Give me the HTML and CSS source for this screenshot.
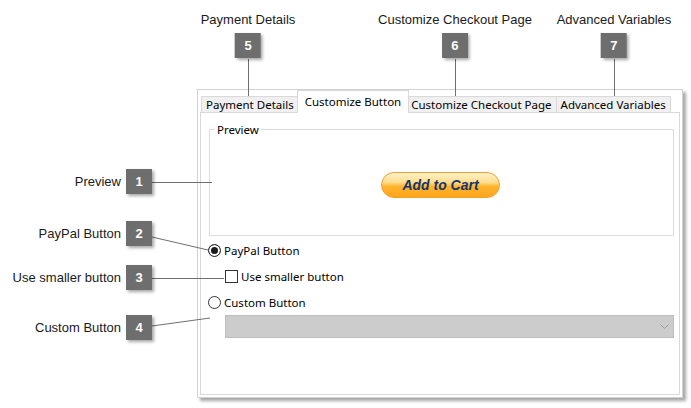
FILE: index.html
```html
<!DOCTYPE html>
<html lang="en">
	<head>
		<meta charset="utf-8">
		<title>Customize Button</title>
		<link rel="stylesheet" href="styles.css">
	</head>
	<body>
		<div class="stage">
			<div class="window">
				<div class="tabs">
					<div class="tab">Payment Details</div>
					<div class="tab active">Customize Button</div>
					<div class="tab">Customize Checkout Page</div>
					<div class="tab">Advanced Variables</div>
				</div>
				<div class="panel">
					<fieldset class="group">
						<legend>Preview</legend>
						<div class="preview">
							<button class="cart-btn" type="button">Add to Cart</button>
						</div>
					</fieldset>
					<label class="option"><input type="radio" name="kind" checked>PayPal Button</label>
					<label class="option sub"><input type="checkbox">Use smaller button</label>
					<label class="option"><input type="radio" name="kind">Custom Button</label>
					<div class="combo sub">
						<svg width="9" height="5" viewBox="0 0 9 5"><polyline points="0.5,0.5 4.5,4.5 8.5,0.5" fill="none" stroke="#9c9c9c" stroke-width="1"/></svg>
					</div>
				</div>
			</div>

			<svg class="leaders" width="691" height="408">
				<path d="M248.5 59 V97 M455.5 59 V97 M614.5 59 V97 M152 182.5 H212 M152 237 L208 250 M152 278.5 H224 M152 326 L210 318" stroke="#6f6f6f" stroke-width="1" fill="none"/>
			</svg>

			<div class="callout top c5"><span class="label">Payment Details</span><span class="badge">5</span></div>
			<div class="callout top c6"><span class="label">Customize Checkout Page</span><span class="badge">6</span></div>
			<div class="callout top c7"><span class="label">Advanced Variables</span><span class="badge">7</span></div>

			<div class="callout side c1"><span class="label">Preview</span><span class="badge">1</span></div>
			<div class="callout side c2"><span class="label">PayPal Button</span><span class="badge">2</span></div>
			<div class="callout side c3"><span class="label">Use smaller button</span><span class="badge">3</span></div>
			<div class="callout side c4"><span class="label">Custom Button</span><span class="badge">4</span></div>
		</div>
	</body>
</html>
```

FILE: styles.css
```css
* {
	box-sizing: border-box;
}
html,
body {
	margin: 0;
	padding: 0;
	background: #fff;
	color: #1a1a1a;
	font-family: "Liberation Sans", Arial, sans-serif;
	font-size: 13px;
}
.stage {
	position: relative;
	width: 691px;
	height: 408px;
	overflow: hidden;
}

/* the dialog */
.window {
	margin: 89px 0 0 197px;
	width: 486px;
	height: 309px;
	padding: 0 2px 2px 2px;
	display: flex;
	flex-direction: column;
	background: #fff;
	border: 1px solid #d2d2d2;
	box-shadow: 3px 3px 3px rgba(0, 0, 0, 0.35);
	font-family: "Noto Sans", sans-serif;
	font-size: 11.5px;
	color: #000;
}
.tabs {
	display: flex;
	align-items: flex-end;
	padding-left: 1px;
	position: relative;
	z-index: 1;
}
.tab {
	height: 16px;
	line-height: 15px;
	padding: 0 4px;
	margin-left: -1px;
	background: #f0f0f0;
	border: 1px solid #d9d9d9;
	border-bottom: none;
	white-space: nowrap;
}
.tab:first-child {
	margin-left: 0;
}
.tab.active {
	height: 23px;
	padding: 3px 7px 4px;
	margin: 0 -2px -1px -2px;
	background: #fff;
	position: relative;
	z-index: 2;
}
.panel {
	flex-grow: 1;
	border: 1px solid #d9d9d9;
	padding: 9px 5px 0 7px;
	display: flex;
	flex-direction: column;
}
.group {
	margin: 0 0 0 1px;
	padding: 0;
	min-width: 0;
	border: 1px solid #dcdcdc;
}
.group legend {
	margin-left: 5px;
	padding: 0 2px;
	line-height: 15px;
}
.preview {
	display: flex;
	justify-content: center;
	padding: 35px 0 37px;
}
.cart-btn {
	width: 119px;
	height: 26px;
	margin-left: -2px;
	padding: 0;
	border: 1px solid #f0a12c;
	border-radius: 13px;
	background: linear-gradient(#fff1cc 0%, #ffdc8a 40%, #ffb52e 56%, #ffa51c 100%);
	color: #15356a;
	font-family: "Liberation Sans", Arial, sans-serif;
	font-size: 14px;
	font-weight: bold;
	font-style: italic;
	cursor: pointer;
}
.option {
	height: 26px;
	display: flex;
	align-items: center;
	gap: 3px;
}
.group + .option {
	margin-top: 1px;
}
.option input {
	appearance: none;
	margin: 0;
	width: 13px;
	height: 13px;
	border: 1px solid #333;
	background: #fff;
}
.option input[type="radio"] {
	border-radius: 50%;
}
.option input[type="radio"]:checked {
	background: #1a1a1a;
	box-shadow: inset 0 0 0 2px #fff;
}
.sub {
	margin-left: 17px;
}
.combo {
	height: 23px;
	border: 1px solid #bdbdbd;
	background: #cccccc;
	display: flex;
	align-items: center;
	justify-content: flex-end;
	padding-right: 4px;
}

/* annotations */
.leaders {
	position: absolute;
	left: 0;
	top: 0;
	pointer-events: none;
}
.callout {
	position: absolute;
	display: flex;
	align-items: center;
}
.callout.top {
	top: 12px;
	flex-direction: column;
	gap: 6px;
	transform: translateX(-50%);
}
.callout.side {
	right: 539px;
	gap: 5px;
}
.label {
	line-height: 15px;
	white-space: nowrap;
}
.badge {
	width: 26px;
	height: 25px;
	display: flex;
	align-items: center;
	justify-content: center;
	background: #6e6e6e;
	color: #fff;
	font-weight: bold;
	font-size: 13px;
	box-shadow: 2px 2px 3px rgba(0, 0, 0, 0.35);
}
.c5 { left: 248px; }
.c6 { left: 455px; }
.c7 { left: 614px; }
.c1 { top: 169px; }
.c2 { top: 221px; }
.c3 { top: 265px; }
.c4 { top: 315px; }
```
